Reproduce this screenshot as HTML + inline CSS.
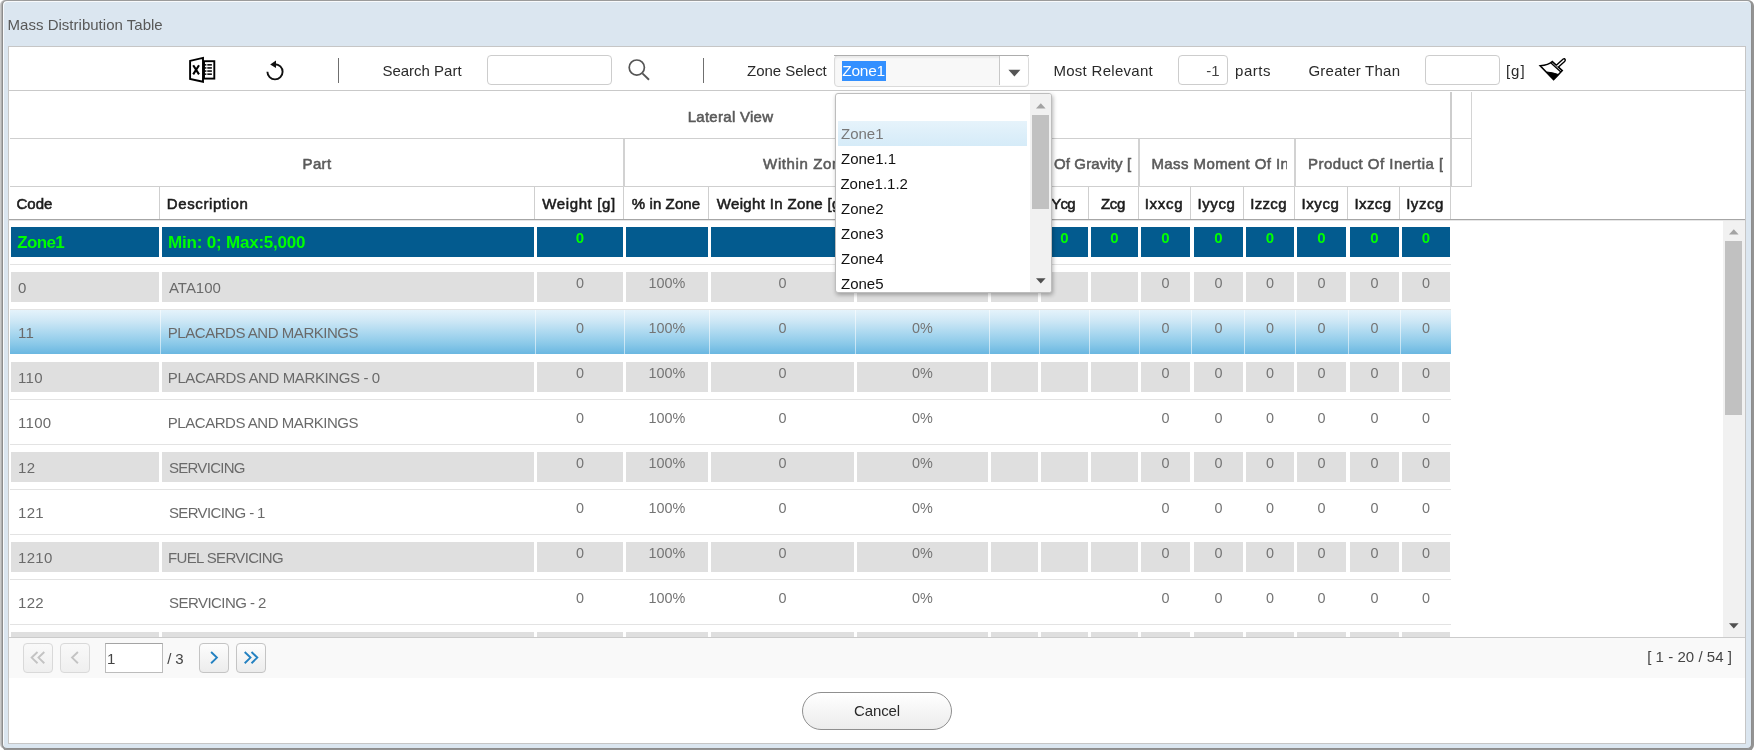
<!DOCTYPE html>
<html lang="en"><head><meta charset="utf-8"><title>Mass Distribution Table</title>
<style>
html,body{margin:0;padding:0}
body{width:1754px;height:750px;overflow:hidden;background:#fff;font-family:"Liberation Sans", sans-serif;font-size:15px;position:relative}
div{position:absolute;box-sizing:border-box}
#root{left:0;top:0;width:1754px;height:750px;will-change:transform}
.t{white-space:nowrap;overflow:visible}
.t span{display:inline-block}
#win{left:2px;top:0;width:1750px;height:749px;background:#dbe6f0;border-style:solid;border-color:#9b9b9b #8d8d8d #8d8d8d #8c8c8c;border-width:1px;border-radius:5px;box-shadow:inset 1px 1px 0 rgba(255,255,255,.8), 1px 1px 0 1px #939393, -1px 0 0 0 #b0b0b0, -2px 0 0 0 #cacaca}
.title{color:#585858;font-size:15px}
.lbl{color:#2a2a2a;font-size:15px}
.gh{color:#5a5a5a;font-size:15px;-webkit-text-stroke:0.55px #5a5a5a}
.ch{color:#1c1c1c;font-size:15px;-webkit-text-stroke:0.55px #1c1c1c}
.c{color:#6a6a6a;font-size:15px}
.n{color:#747474;font-size:14.4px}
.z{color:#00ff00;font-size:17px;font-weight:bold}
.zn{color:#00ff00;font-size:15px;font-weight:bold}
.dd{color:#111;font-size:15px}
.pg{color:#444;font-size:15px}
.inp{background:#fff;border:1px solid #cdcdcd;border-radius:4px}
.vl{background:#cfcfcf;width:1px}
.hl{background:#cfcfcf;height:1px}
.cell{background:#dfdfdf}
.zcell{background:#035b8f}
.pbtn{border:1px solid #d9d9d9;border-radius:4px;background:linear-gradient(#f9f9f9,#efefef)}
.pbtn.on{border-color:#c4c4c4;background:linear-gradient(#fdfdfd,#ececec)}
svg{position:absolute;overflow:visible}
</style></head>
<body>
<div id="root">
<div id="win"></div>
<div class="t title" style="left:7.6px;top:16px;height:18px;line-height:18px;letter-spacing:0.013px;">Mass Distribution Table</div>
<div style="left:8px;top:46px;width:1738px;height:698px;background:#fff;border:1px solid #c6c6c6"></div>
<div style="left:9px;top:90px;width:1736px;height:1px;background:#c9c9c9"></div>
<svg style="left:186px;top:54px" width="32" height="32" viewBox="186 54 32 32">
<rect x="204" y="61.2" width="10.3" height="17.4" fill="#fff" stroke="#000" stroke-width="1.9"/>
<g fill="#000"><rect x="204.2" y="64.1" width="2.2" height="1.5"/><rect x="207.3" y="64.1" width="4.6" height="1.5"/>
<rect x="204.2" y="67.2" width="2.2" height="1.5"/><rect x="207.3" y="67.2" width="4.6" height="1.5"/>
<rect x="204.2" y="70.3" width="2.2" height="1.5"/><rect x="207.3" y="70.3" width="4.6" height="1.5"/>
<rect x="204.2" y="73.4" width="2.2" height="1.5"/><rect x="207.3" y="73.4" width="4.6" height="1.5"/></g>
<path d="M190.1 60.9 L203 57.9 L203 81.8 L190.1 79 Z" fill="#fff" stroke="#000" stroke-width="1.9" stroke-linejoin="miter"/>
<path d="M193.2 65.2 L199 74.4 M199 65.2 L193.2 74.4" stroke="#000" stroke-width="2.1" fill="none"/>
</svg>
<svg style="left:262px;top:56px" width="26" height="28" viewBox="262 56 26 28">
<path d="M275 64.2 A7.6 7.6 0 1 1 267.4 71.8" fill="none" stroke="#111" stroke-width="1.9"/>
<path d="M270.2 64.4 L276 60.6 L276 68 Z" fill="#111"/>
</svg>
<div style="left:338px;top:58px;width:1px;height:25px;background:#6f6f6f"></div>
<div style="left:703px;top:58px;width:1px;height:25px;background:#6f6f6f"></div>
<div class="t lbl" style="left:382.4px;top:56px;height:30px;line-height:30px;letter-spacing:-0.004px;">Search Part</div>
<div class="inp" style="left:487px;top:55px;width:125px;height:30px;"></div>
<svg style="left:626px;top:57px" width="26" height="26" viewBox="626 57 26 26">
<circle cx="636.8" cy="67.6" r="7.6" fill="none" stroke="#555" stroke-width="1.7"/>
<path d="M642.4 73.4 L649 79.8" stroke="#555" stroke-width="1.9" fill="none"/>
</svg>
<div class="t lbl" style="left:747px;top:56px;height:30px;line-height:30px;letter-spacing:-0.028px;">Zone Select</div>
<div style="left:834px;top:55px;width:195px;height:31.5px;background:#f8f8f8;border:1px solid #dadada;border-radius:4px;box-shadow:inset 0 2px 2px rgba(0,0,0,.06)"></div>
<div style="left:834px;top:55px;width:195px;height:1px;background:#adadad"></div>
<div style="left:999px;top:56px;width:29px;height:29px;background:#fff;border-left:1px solid #c8c8c8;border-radius:0 3px 3px 0"></div>
<svg style="left:1008px;top:69px" width="13" height="8" viewBox="0 0 13 8"><path d="M0.4 0.8 L12.4 0.8 L6.4 7.6 Z" fill="#555"/></svg>
<div style="left:842px;top:61px;width:44px;height:20px;background:#3390ff"></div>
<div class="t dd" style="left:842.3px;top:61px;height:20px;line-height:20px;letter-spacing:-0.257px;color:#fff;font-size:15.5px">Zone1</div>
<div class="t lbl" style="left:1053.4px;top:56px;height:30px;line-height:30px;letter-spacing:0.291px;">Most Relevant</div>
<div class="inp" style="left:1178px;top:55px;width:50px;height:30px;"></div>
<div class="t lbl" style="left:1178px;top:56px;height:30px;line-height:30px;width:50px;text-align:right;padding-right:8.5px;color:#444">-1</div>
<div class="t lbl" style="left:1235px;top:56px;height:30px;line-height:30px;letter-spacing:0.538px;">parts</div>
<div class="t lbl" style="left:1308.4px;top:56px;height:30px;line-height:30px;letter-spacing:0.248px;">Greater Than</div>
<div class="inp" style="left:1425px;top:55px;width:75px;height:30px;"></div>
<div class="t lbl" style="left:1506px;top:56px;height:30px;line-height:30px;letter-spacing:0.945px;">[g]</div>
<svg style="left:1538px;top:56px" width="30" height="28" viewBox="1538 56 30 28">
<path d="M1540.2 65.8 Q1548.5 65.4 1552.3 61.6 L1562.3 70.6 L1553.6 79.6 Z" fill="#fff" stroke="#000" stroke-width="1.45" stroke-linejoin="miter"/>
<path d="M1546.8 72.0 Q1552.5 72.4 1558.6 74.6 L1553.6 79.6 Z" fill="#000" stroke="#000" stroke-width="1"/>
<path d="M1551.0 63.1 L1560.9 72.1" stroke="#000" stroke-width="1.3" fill="none"/>
<path d="M1556.3 65.3 L1563.2 59.0 Q1564.6 58.2 1565.2 59.6 Q1565.5 60.6 1564.6 61.4 L1558.2 67.2" fill="#fff" stroke="#000" stroke-width="1.4"/>
</svg>
<div class="hl" style="left:10px;top:138px;width:1462px;height:1px;"></div>
<div class="hl" style="left:10px;top:186px;width:1462px;height:1px;"></div>
<div style="left:9px;top:219px;width:1736px;height:1px;background:#a6a6a6"></div>
<div style="left:9px;top:220px;width:1736px;height:1px;background:#e6e6e6"></div>
<div style="left:1450px;top:92px;width:2px;height:95px;background:#cdcdcd"></div>
<div style="left:1471px;top:92px;width:1px;height:95px;background:#d4d4d4"></div>
<div style="left:623px;top:139px;width:2px;height:48px;background:#d2d2d2"></div>
<div style="left:988px;top:139px;width:2px;height:48px;background:#d2d2d2"></div>
<div style="left:1138px;top:139px;width:2px;height:48px;background:#d2d2d2"></div>
<div style="left:1294px;top:139px;width:2px;height:48px;background:#d2d2d2"></div>
<div class="vl" style="left:159px;top:187px;width:1px;height:32px;"></div>
<div class="vl" style="left:534px;top:187px;width:1px;height:32px;"></div>
<div class="vl" style="left:623px;top:187px;width:1px;height:32px;"></div>
<div class="vl" style="left:708px;top:187px;width:1px;height:32px;"></div>
<div class="vl" style="left:854px;top:187px;width:1px;height:32px;"></div>
<div class="vl" style="left:988px;top:187px;width:1px;height:32px;"></div>
<div class="vl" style="left:1038px;top:187px;width:1px;height:32px;"></div>
<div class="vl" style="left:1088px;top:187px;width:1px;height:32px;"></div>
<div class="vl" style="left:1138px;top:187px;width:1px;height:32px;"></div>
<div class="vl" style="left:1190px;top:187px;width:1px;height:32px;"></div>
<div class="vl" style="left:1243px;top:187px;width:1px;height:32px;"></div>
<div class="vl" style="left:1294px;top:187px;width:1px;height:32px;"></div>
<div class="vl" style="left:1347px;top:187px;width:1px;height:32px;"></div>
<div class="vl" style="left:1399px;top:187px;width:1px;height:32px;"></div>
<div class="vl" style="left:1450px;top:187px;width:1px;height:32px;"></div>
<div class="t gh" style="left:10px;top:94px;height:46px;line-height:46px;width:1441px;text-align:center;letter-spacing:0.287px;">Lateral View</div>
<div class="t gh" style="left:10px;top:140px;height:47px;line-height:47px;width:614px;text-align:center;letter-spacing:0.319px;">Part</div>
<div class="t gh" style="left:624px;top:140px;height:47px;line-height:47px;width:365px;text-align:center;letter-spacing:0.611px;">Within Zone</div>
<div class="t gh" style="left:1001px;top:140px;height:47px;line-height:47px;">Center</div>
<div class="t gh" style="left:1054px;top:140px;height:47px;line-height:47px;letter-spacing:0.120px;overflow:hidden;width:77.5px">Of Gravity [mm]</div>
<div class="t gh" style="left:1151.4px;top:140px;height:47px;line-height:47px;letter-spacing:0.416px;overflow:hidden;width:136px">Mass Moment Of Inertia [g mm2]</div>
<div class="t gh" style="left:1308px;top:140px;height:47px;line-height:47px;letter-spacing:0.488px;overflow:hidden;width:134.5px">Product Of Inertia [g mm2]</div>
<div class="t ch" style="left:16.5px;top:188px;height:32px;line-height:32px;letter-spacing:-0.006px;">Code</div>
<div class="t ch" style="left:166.8px;top:188px;height:32px;line-height:32px;letter-spacing:0.601px;">Description</div>
<div class="t ch" style="left:534px;top:188px;height:32px;line-height:32px;width:90px;text-align:center;letter-spacing:0.612px;">Weight [g]</div>
<div class="t ch" style="left:624px;top:188px;height:32px;line-height:32px;width:84px;text-align:center;letter-spacing:0.101px;">% in Zone</div>
<div class="t ch" style="left:708px;top:188px;height:32px;line-height:32px;width:146px;text-align:center;letter-spacing:0.346px;">Weight In Zone [g]</div>
<div class="t ch" style="left:854px;top:188px;height:32px;line-height:32px;width:134px;text-align:center;">% Of Zone [%]</div>
<div class="t ch" style="left:988px;top:188px;height:32px;line-height:32px;width:50px;text-align:center;">Xcg</div>
<div class="t ch" style="left:1038px;top:188px;height:32px;line-height:32px;width:50px;text-align:center;letter-spacing:-0.700px;">Ycg</div>
<div class="t ch" style="left:1088px;top:188px;height:32px;line-height:32px;width:50px;text-align:center;letter-spacing:-0.331px;">Zcg</div>
<div class="t ch" style="left:1138px;top:188px;height:32px;line-height:32px;width:52px;text-align:center;letter-spacing:0.733px;">Ixxcg</div>
<div class="t ch" style="left:1190px;top:188px;height:32px;line-height:32px;width:53px;text-align:center;letter-spacing:0.633px;">Iyycg</div>
<div class="t ch" style="left:1243px;top:188px;height:32px;line-height:32px;width:51px;text-align:center;letter-spacing:0.333px;">Izzcg</div>
<div class="t ch" style="left:1294px;top:188px;height:32px;line-height:32px;width:53px;text-align:center;letter-spacing:0.583px;">Ixycg</div>
<div class="t ch" style="left:1347px;top:188px;height:32px;line-height:32px;width:52px;text-align:center;letter-spacing:0.433px;">Ixzcg</div>
<div class="t ch" style="left:1399px;top:188px;height:32px;line-height:32px;width:52px;text-align:center;letter-spacing:0.533px;">Iyzcg</div>
<div class="zcell" style="left:11px;top:227px;width:148px;height:30px;"></div>
<div class="zcell" style="left:162px;top:227px;width:372px;height:30px;"></div>
<div class="zcell" style="left:537px;top:227px;width:86px;height:30px;"></div>
<div class="zcell" style="left:626px;top:227px;width:82px;height:30px;"></div>
<div class="zcell" style="left:711px;top:227px;width:143px;height:30px;"></div>
<div class="zcell" style="left:857px;top:227px;width:131px;height:30px;"></div>
<div class="zcell" style="left:991px;top:227px;width:47px;height:30px;"></div>
<div class="zcell" style="left:1041px;top:227px;width:47px;height:30px;"></div>
<div class="zcell" style="left:1091px;top:227px;width:47px;height:30px;"></div>
<div class="zcell" style="left:1141px;top:227px;width:49px;height:30px;"></div>
<div class="zcell" style="left:1194px;top:227px;width:49px;height:30px;"></div>
<div class="zcell" style="left:1246px;top:227px;width:48px;height:30px;"></div>
<div class="zcell" style="left:1297px;top:227px;width:49px;height:30px;"></div>
<div class="zcell" style="left:1350px;top:227px;width:49px;height:30px;"></div>
<div class="zcell" style="left:1402px;top:227px;width:48px;height:30px;"></div>
<div class="t z" style="left:17.3px;top:228px;height:30px;line-height:30px;letter-spacing:-0.677px;">Zone1</div>
<div class="t z" style="left:168.1px;top:228px;height:30px;line-height:30px;letter-spacing:-0.207px;">Min: 0; Max:5,000</div>
<div class="t zn" style="left:537px;top:223px;height:30px;line-height:30px;width:86px;text-align:center;">0</div>
<div class="t zn" style="left:991px;top:223px;height:30px;line-height:30px;width:47px;text-align:center;">0</div>
<div class="t zn" style="left:1041px;top:223px;height:30px;line-height:30px;width:47px;text-align:center;">0</div>
<div class="t zn" style="left:1091px;top:223px;height:30px;line-height:30px;width:47px;text-align:center;">0</div>
<div class="t zn" style="left:1141px;top:223px;height:30px;line-height:30px;width:49px;text-align:center;">0</div>
<div class="t zn" style="left:1194px;top:223px;height:30px;line-height:30px;width:49px;text-align:center;">0</div>
<div class="t zn" style="left:1246px;top:223px;height:30px;line-height:30px;width:48px;text-align:center;">0</div>
<div class="t zn" style="left:1297px;top:223px;height:30px;line-height:30px;width:49px;text-align:center;">0</div>
<div class="t zn" style="left:1350px;top:223px;height:30px;line-height:30px;width:49px;text-align:center;">0</div>
<div class="t zn" style="left:1402px;top:223px;height:30px;line-height:30px;width:48px;text-align:center;">0</div>
<div style="left:10px;top:264px;width:1441px;height:1px;background:#e3e3e3"></div>
<div class="cell" style="left:11px;top:272px;width:148px;height:30px;"></div>
<div class="cell" style="left:162px;top:272px;width:372px;height:30px;"></div>
<div class="cell" style="left:537px;top:272px;width:86px;height:30px;"></div>
<div class="cell" style="left:626px;top:272px;width:82px;height:30px;"></div>
<div class="cell" style="left:711px;top:272px;width:143px;height:30px;"></div>
<div class="cell" style="left:857px;top:272px;width:131px;height:30px;"></div>
<div class="cell" style="left:991px;top:272px;width:47px;height:30px;"></div>
<div class="cell" style="left:1041px;top:272px;width:47px;height:30px;"></div>
<div class="cell" style="left:1091px;top:272px;width:47px;height:30px;"></div>
<div class="cell" style="left:1141px;top:272px;width:49px;height:30px;"></div>
<div class="cell" style="left:1194px;top:272px;width:49px;height:30px;"></div>
<div class="cell" style="left:1246px;top:272px;width:48px;height:30px;"></div>
<div class="cell" style="left:1297px;top:272px;width:49px;height:30px;"></div>
<div class="cell" style="left:1350px;top:272px;width:49px;height:30px;"></div>
<div class="cell" style="left:1402px;top:272px;width:48px;height:30px;"></div>
<div class="t c" style="left:18px;top:273px;height:30px;line-height:30px;letter-spacing:0.300px;">0</div>
<div class="t c" style="left:169px;top:273px;height:30px;line-height:30px;letter-spacing:-0.026px;">ATA100</div>
<div class="t n" style="left:537px;top:268px;height:30px;line-height:30px;width:86px;text-align:center;">0</div>
<div class="t n" style="left:626px;top:268px;height:30px;line-height:30px;width:82px;text-align:center;">100%</div>
<div class="t n" style="left:711px;top:268px;height:30px;line-height:30px;width:143px;text-align:center;">0</div>
<div class="t n" style="left:857px;top:268px;height:30px;line-height:30px;width:131px;text-align:center;">0%</div>
<div class="t n" style="left:1141px;top:268px;height:30px;line-height:30px;width:49px;text-align:center;">0</div>
<div class="t n" style="left:1194px;top:268px;height:30px;line-height:30px;width:49px;text-align:center;">0</div>
<div class="t n" style="left:1246px;top:268px;height:30px;line-height:30px;width:48px;text-align:center;">0</div>
<div class="t n" style="left:1297px;top:268px;height:30px;line-height:30px;width:49px;text-align:center;">0</div>
<div class="t n" style="left:1350px;top:268px;height:30px;line-height:30px;width:49px;text-align:center;">0</div>
<div class="t n" style="left:1402px;top:268px;height:30px;line-height:30px;width:48px;text-align:center;">0</div>
<div style="left:10px;top:309px;width:1441px;height:1px;background:#e3e3e3"></div>
<div style="left:10px;top:310px;width:1441px;height:44px;background:linear-gradient(#e5f3fb 0%,#cde7f5 25%,#add9f0 50%,#8dcae9 75%,#6ab7e1 100%)"></div>
<div style="left:160px;top:310px;width:1px;height:44px;background:rgba(255,255,255,.55)"></div>
<div style="left:535px;top:310px;width:1px;height:44px;background:rgba(255,255,255,.55)"></div>
<div style="left:624px;top:310px;width:1px;height:44px;background:rgba(255,255,255,.55)"></div>
<div style="left:709px;top:310px;width:1px;height:44px;background:rgba(255,255,255,.55)"></div>
<div style="left:855px;top:310px;width:1px;height:44px;background:rgba(255,255,255,.55)"></div>
<div style="left:989px;top:310px;width:1px;height:44px;background:rgba(255,255,255,.55)"></div>
<div style="left:1039px;top:310px;width:1px;height:44px;background:rgba(255,255,255,.55)"></div>
<div style="left:1089px;top:310px;width:1px;height:44px;background:rgba(255,255,255,.55)"></div>
<div style="left:1139px;top:310px;width:1px;height:44px;background:rgba(255,255,255,.55)"></div>
<div style="left:1191px;top:310px;width:1px;height:44px;background:rgba(255,255,255,.55)"></div>
<div style="left:1244px;top:310px;width:1px;height:44px;background:rgba(255,255,255,.55)"></div>
<div style="left:1295px;top:310px;width:1px;height:44px;background:rgba(255,255,255,.55)"></div>
<div style="left:1348px;top:310px;width:1px;height:44px;background:rgba(255,255,255,.55)"></div>
<div style="left:1400px;top:310px;width:1px;height:44px;background:rgba(255,255,255,.55)"></div>
<div class="t c" style="left:18px;top:318px;height:30px;line-height:30px;letter-spacing:0.300px;">11</div>
<div class="t c" style="left:167.8px;top:318px;height:30px;line-height:30px;letter-spacing:-0.463px;">PLACARDS AND MARKINGS</div>
<div class="t n" style="left:537px;top:313px;height:30px;line-height:30px;width:86px;text-align:center;">0</div>
<div class="t n" style="left:626px;top:313px;height:30px;line-height:30px;width:82px;text-align:center;">100%</div>
<div class="t n" style="left:711px;top:313px;height:30px;line-height:30px;width:143px;text-align:center;">0</div>
<div class="t n" style="left:857px;top:313px;height:30px;line-height:30px;width:131px;text-align:center;">0%</div>
<div class="t n" style="left:1141px;top:313px;height:30px;line-height:30px;width:49px;text-align:center;">0</div>
<div class="t n" style="left:1194px;top:313px;height:30px;line-height:30px;width:49px;text-align:center;">0</div>
<div class="t n" style="left:1246px;top:313px;height:30px;line-height:30px;width:48px;text-align:center;">0</div>
<div class="t n" style="left:1297px;top:313px;height:30px;line-height:30px;width:49px;text-align:center;">0</div>
<div class="t n" style="left:1350px;top:313px;height:30px;line-height:30px;width:49px;text-align:center;">0</div>
<div class="t n" style="left:1402px;top:313px;height:30px;line-height:30px;width:48px;text-align:center;">0</div>
<div class="cell" style="left:11px;top:362px;width:148px;height:30px;"></div>
<div class="cell" style="left:162px;top:362px;width:372px;height:30px;"></div>
<div class="cell" style="left:537px;top:362px;width:86px;height:30px;"></div>
<div class="cell" style="left:626px;top:362px;width:82px;height:30px;"></div>
<div class="cell" style="left:711px;top:362px;width:143px;height:30px;"></div>
<div class="cell" style="left:857px;top:362px;width:131px;height:30px;"></div>
<div class="cell" style="left:991px;top:362px;width:47px;height:30px;"></div>
<div class="cell" style="left:1041px;top:362px;width:47px;height:30px;"></div>
<div class="cell" style="left:1091px;top:362px;width:47px;height:30px;"></div>
<div class="cell" style="left:1141px;top:362px;width:49px;height:30px;"></div>
<div class="cell" style="left:1194px;top:362px;width:49px;height:30px;"></div>
<div class="cell" style="left:1246px;top:362px;width:48px;height:30px;"></div>
<div class="cell" style="left:1297px;top:362px;width:49px;height:30px;"></div>
<div class="cell" style="left:1350px;top:362px;width:49px;height:30px;"></div>
<div class="cell" style="left:1402px;top:362px;width:48px;height:30px;"></div>
<div class="t c" style="left:18px;top:363px;height:30px;line-height:30px;letter-spacing:0.300px;">110</div>
<div class="t c" style="left:167.8px;top:363px;height:30px;line-height:30px;letter-spacing:-0.392px;">PLACARDS AND MARKINGS - 0</div>
<div class="t n" style="left:537px;top:358px;height:30px;line-height:30px;width:86px;text-align:center;">0</div>
<div class="t n" style="left:626px;top:358px;height:30px;line-height:30px;width:82px;text-align:center;">100%</div>
<div class="t n" style="left:711px;top:358px;height:30px;line-height:30px;width:143px;text-align:center;">0</div>
<div class="t n" style="left:857px;top:358px;height:30px;line-height:30px;width:131px;text-align:center;">0%</div>
<div class="t n" style="left:1141px;top:358px;height:30px;line-height:30px;width:49px;text-align:center;">0</div>
<div class="t n" style="left:1194px;top:358px;height:30px;line-height:30px;width:49px;text-align:center;">0</div>
<div class="t n" style="left:1246px;top:358px;height:30px;line-height:30px;width:48px;text-align:center;">0</div>
<div class="t n" style="left:1297px;top:358px;height:30px;line-height:30px;width:49px;text-align:center;">0</div>
<div class="t n" style="left:1350px;top:358px;height:30px;line-height:30px;width:49px;text-align:center;">0</div>
<div class="t n" style="left:1402px;top:358px;height:30px;line-height:30px;width:48px;text-align:center;">0</div>
<div style="left:10px;top:399px;width:1441px;height:1px;background:#e3e3e3"></div>
<div class="t c" style="left:18px;top:408px;height:30px;line-height:30px;letter-spacing:0.300px;">1100</div>
<div class="t c" style="left:167.8px;top:408px;height:30px;line-height:30px;letter-spacing:-0.463px;">PLACARDS AND MARKINGS</div>
<div class="t n" style="left:537px;top:403px;height:30px;line-height:30px;width:86px;text-align:center;">0</div>
<div class="t n" style="left:626px;top:403px;height:30px;line-height:30px;width:82px;text-align:center;">100%</div>
<div class="t n" style="left:711px;top:403px;height:30px;line-height:30px;width:143px;text-align:center;">0</div>
<div class="t n" style="left:857px;top:403px;height:30px;line-height:30px;width:131px;text-align:center;">0%</div>
<div class="t n" style="left:1141px;top:403px;height:30px;line-height:30px;width:49px;text-align:center;">0</div>
<div class="t n" style="left:1194px;top:403px;height:30px;line-height:30px;width:49px;text-align:center;">0</div>
<div class="t n" style="left:1246px;top:403px;height:30px;line-height:30px;width:48px;text-align:center;">0</div>
<div class="t n" style="left:1297px;top:403px;height:30px;line-height:30px;width:49px;text-align:center;">0</div>
<div class="t n" style="left:1350px;top:403px;height:30px;line-height:30px;width:49px;text-align:center;">0</div>
<div class="t n" style="left:1402px;top:403px;height:30px;line-height:30px;width:48px;text-align:center;">0</div>
<div style="left:10px;top:444px;width:1441px;height:1px;background:#e3e3e3"></div>
<div class="cell" style="left:11px;top:452px;width:148px;height:30px;"></div>
<div class="cell" style="left:162px;top:452px;width:372px;height:30px;"></div>
<div class="cell" style="left:537px;top:452px;width:86px;height:30px;"></div>
<div class="cell" style="left:626px;top:452px;width:82px;height:30px;"></div>
<div class="cell" style="left:711px;top:452px;width:143px;height:30px;"></div>
<div class="cell" style="left:857px;top:452px;width:131px;height:30px;"></div>
<div class="cell" style="left:991px;top:452px;width:47px;height:30px;"></div>
<div class="cell" style="left:1041px;top:452px;width:47px;height:30px;"></div>
<div class="cell" style="left:1091px;top:452px;width:47px;height:30px;"></div>
<div class="cell" style="left:1141px;top:452px;width:49px;height:30px;"></div>
<div class="cell" style="left:1194px;top:452px;width:49px;height:30px;"></div>
<div class="cell" style="left:1246px;top:452px;width:48px;height:30px;"></div>
<div class="cell" style="left:1297px;top:452px;width:49px;height:30px;"></div>
<div class="cell" style="left:1350px;top:452px;width:49px;height:30px;"></div>
<div class="cell" style="left:1402px;top:452px;width:48px;height:30px;"></div>
<div class="t c" style="left:18px;top:453px;height:30px;line-height:30px;letter-spacing:0.300px;">12</div>
<div class="t c" style="left:168.9px;top:453px;height:30px;line-height:30px;letter-spacing:-0.700px;">SERVICING</div>
<div class="t n" style="left:537px;top:448px;height:30px;line-height:30px;width:86px;text-align:center;">0</div>
<div class="t n" style="left:626px;top:448px;height:30px;line-height:30px;width:82px;text-align:center;">100%</div>
<div class="t n" style="left:711px;top:448px;height:30px;line-height:30px;width:143px;text-align:center;">0</div>
<div class="t n" style="left:857px;top:448px;height:30px;line-height:30px;width:131px;text-align:center;">0%</div>
<div class="t n" style="left:1141px;top:448px;height:30px;line-height:30px;width:49px;text-align:center;">0</div>
<div class="t n" style="left:1194px;top:448px;height:30px;line-height:30px;width:49px;text-align:center;">0</div>
<div class="t n" style="left:1246px;top:448px;height:30px;line-height:30px;width:48px;text-align:center;">0</div>
<div class="t n" style="left:1297px;top:448px;height:30px;line-height:30px;width:49px;text-align:center;">0</div>
<div class="t n" style="left:1350px;top:448px;height:30px;line-height:30px;width:49px;text-align:center;">0</div>
<div class="t n" style="left:1402px;top:448px;height:30px;line-height:30px;width:48px;text-align:center;">0</div>
<div style="left:10px;top:489px;width:1441px;height:1px;background:#e3e3e3"></div>
<div class="t c" style="left:18px;top:498px;height:30px;line-height:30px;letter-spacing:0.300px;">121</div>
<div class="t c" style="left:168.9px;top:498px;height:30px;line-height:30px;letter-spacing:-0.614px;">SERVICING - 1</div>
<div class="t n" style="left:537px;top:493px;height:30px;line-height:30px;width:86px;text-align:center;">0</div>
<div class="t n" style="left:626px;top:493px;height:30px;line-height:30px;width:82px;text-align:center;">100%</div>
<div class="t n" style="left:711px;top:493px;height:30px;line-height:30px;width:143px;text-align:center;">0</div>
<div class="t n" style="left:857px;top:493px;height:30px;line-height:30px;width:131px;text-align:center;">0%</div>
<div class="t n" style="left:1141px;top:493px;height:30px;line-height:30px;width:49px;text-align:center;">0</div>
<div class="t n" style="left:1194px;top:493px;height:30px;line-height:30px;width:49px;text-align:center;">0</div>
<div class="t n" style="left:1246px;top:493px;height:30px;line-height:30px;width:48px;text-align:center;">0</div>
<div class="t n" style="left:1297px;top:493px;height:30px;line-height:30px;width:49px;text-align:center;">0</div>
<div class="t n" style="left:1350px;top:493px;height:30px;line-height:30px;width:49px;text-align:center;">0</div>
<div class="t n" style="left:1402px;top:493px;height:30px;line-height:30px;width:48px;text-align:center;">0</div>
<div style="left:10px;top:534px;width:1441px;height:1px;background:#e3e3e3"></div>
<div class="cell" style="left:11px;top:542px;width:148px;height:30px;"></div>
<div class="cell" style="left:162px;top:542px;width:372px;height:30px;"></div>
<div class="cell" style="left:537px;top:542px;width:86px;height:30px;"></div>
<div class="cell" style="left:626px;top:542px;width:82px;height:30px;"></div>
<div class="cell" style="left:711px;top:542px;width:143px;height:30px;"></div>
<div class="cell" style="left:857px;top:542px;width:131px;height:30px;"></div>
<div class="cell" style="left:991px;top:542px;width:47px;height:30px;"></div>
<div class="cell" style="left:1041px;top:542px;width:47px;height:30px;"></div>
<div class="cell" style="left:1091px;top:542px;width:47px;height:30px;"></div>
<div class="cell" style="left:1141px;top:542px;width:49px;height:30px;"></div>
<div class="cell" style="left:1194px;top:542px;width:49px;height:30px;"></div>
<div class="cell" style="left:1246px;top:542px;width:48px;height:30px;"></div>
<div class="cell" style="left:1297px;top:542px;width:49px;height:30px;"></div>
<div class="cell" style="left:1350px;top:542px;width:49px;height:30px;"></div>
<div class="cell" style="left:1402px;top:542px;width:48px;height:30px;"></div>
<div class="t c" style="left:18px;top:543px;height:30px;line-height:30px;letter-spacing:0.300px;">1210</div>
<div class="t c" style="left:168px;top:543px;height:30px;line-height:30px;letter-spacing:-0.653px;">FUEL SERVICING</div>
<div class="t n" style="left:537px;top:538px;height:30px;line-height:30px;width:86px;text-align:center;">0</div>
<div class="t n" style="left:626px;top:538px;height:30px;line-height:30px;width:82px;text-align:center;">100%</div>
<div class="t n" style="left:711px;top:538px;height:30px;line-height:30px;width:143px;text-align:center;">0</div>
<div class="t n" style="left:857px;top:538px;height:30px;line-height:30px;width:131px;text-align:center;">0%</div>
<div class="t n" style="left:1141px;top:538px;height:30px;line-height:30px;width:49px;text-align:center;">0</div>
<div class="t n" style="left:1194px;top:538px;height:30px;line-height:30px;width:49px;text-align:center;">0</div>
<div class="t n" style="left:1246px;top:538px;height:30px;line-height:30px;width:48px;text-align:center;">0</div>
<div class="t n" style="left:1297px;top:538px;height:30px;line-height:30px;width:49px;text-align:center;">0</div>
<div class="t n" style="left:1350px;top:538px;height:30px;line-height:30px;width:49px;text-align:center;">0</div>
<div class="t n" style="left:1402px;top:538px;height:30px;line-height:30px;width:48px;text-align:center;">0</div>
<div style="left:10px;top:579px;width:1441px;height:1px;background:#e3e3e3"></div>
<div class="t c" style="left:18px;top:588px;height:30px;line-height:30px;letter-spacing:0.300px;">122</div>
<div class="t c" style="left:169px;top:588px;height:30px;line-height:30px;letter-spacing:-0.548px;">SERVICING - 2</div>
<div class="t n" style="left:537px;top:583px;height:30px;line-height:30px;width:86px;text-align:center;">0</div>
<div class="t n" style="left:626px;top:583px;height:30px;line-height:30px;width:82px;text-align:center;">100%</div>
<div class="t n" style="left:711px;top:583px;height:30px;line-height:30px;width:143px;text-align:center;">0</div>
<div class="t n" style="left:857px;top:583px;height:30px;line-height:30px;width:131px;text-align:center;">0%</div>
<div class="t n" style="left:1141px;top:583px;height:30px;line-height:30px;width:49px;text-align:center;">0</div>
<div class="t n" style="left:1194px;top:583px;height:30px;line-height:30px;width:49px;text-align:center;">0</div>
<div class="t n" style="left:1246px;top:583px;height:30px;line-height:30px;width:48px;text-align:center;">0</div>
<div class="t n" style="left:1297px;top:583px;height:30px;line-height:30px;width:49px;text-align:center;">0</div>
<div class="t n" style="left:1350px;top:583px;height:30px;line-height:30px;width:49px;text-align:center;">0</div>
<div class="t n" style="left:1402px;top:583px;height:30px;line-height:30px;width:48px;text-align:center;">0</div>
<div style="left:10px;top:624px;width:1441px;height:1px;background:#e3e3e3"></div>
<div class="cell" style="left:11px;top:632px;width:148px;height:6px;"></div>
<div class="cell" style="left:162px;top:632px;width:372px;height:6px;"></div>
<div class="cell" style="left:537px;top:632px;width:86px;height:6px;"></div>
<div class="cell" style="left:626px;top:632px;width:82px;height:6px;"></div>
<div class="cell" style="left:711px;top:632px;width:143px;height:6px;"></div>
<div class="cell" style="left:857px;top:632px;width:131px;height:6px;"></div>
<div class="cell" style="left:991px;top:632px;width:47px;height:6px;"></div>
<div class="cell" style="left:1041px;top:632px;width:47px;height:6px;"></div>
<div class="cell" style="left:1091px;top:632px;width:47px;height:6px;"></div>
<div class="cell" style="left:1141px;top:632px;width:49px;height:6px;"></div>
<div class="cell" style="left:1194px;top:632px;width:49px;height:6px;"></div>
<div class="cell" style="left:1246px;top:632px;width:48px;height:6px;"></div>
<div class="cell" style="left:1297px;top:632px;width:49px;height:6px;"></div>
<div class="cell" style="left:1350px;top:632px;width:49px;height:6px;"></div>
<div class="cell" style="left:1402px;top:632px;width:48px;height:6px;"></div>
<div style="left:1723px;top:221px;width:22px;height:417px;background:#f1f1f1"></div>
<div style="left:1725px;top:241px;width:17px;height:174px;background:#c1c1c1"></div>
<svg style="left:1729px;top:229px" width="10" height="6" viewBox="0 0 10 6"><path d="M0 5.4 L4.8 0.2 L9.6 5.4 Z" fill="#a3a3a3"/></svg>
<svg style="left:1729px;top:623px" width="10" height="6" viewBox="0 0 10 6"><path d="M0 0.2 L9.6 0.2 L4.8 5.4 Z" fill="#505050"/></svg>
<div style="left:9px;top:637px;width:1736px;height:41px;background:#f9f9f9;border-top:1px solid #cbcbcb"></div>
<div class="pbtn" style="left:23px;top:643px;width:30px;height:30px;"></div>
<svg style="left:0;top:0" width="1" height="1"><path d="M37.5 652.0 L31.7 657.6 L37.5 663.2 M44.3 652.0 L38.5 657.6 L44.3 663.2" fill="none" stroke="#c3c3c3" stroke-width="1.9"/></svg>
<div class="pbtn" style="left:60px;top:643px;width:30px;height:30px;"></div>
<svg style="left:0;top:0" width="1" height="1"><path d="M77.9 652.0 L72.1 657.6 L77.9 663.2" fill="none" stroke="#c3c3c3" stroke-width="1.9"/></svg>
<div style="left:105px;top:643px;width:58px;height:30px;background:#fff;border:1px solid #bcbcbc;border-top-color:#a4a4a4"></div>
<div class="t pg" style="left:107px;top:644px;height:30px;line-height:30px;">1</div>
<div class="t pg" style="left:167.3px;top:644px;height:30px;line-height:30px;letter-spacing:-0.167px;">/ 3</div>
<div class="pbtn on" style="left:199px;top:643px;width:30px;height:30px;"></div>
<svg style="left:0;top:0" width="1" height="1"><path d="M211.1 652.0 L216.9 657.6 L211.1 663.2" fill="none" stroke="#2381c1" stroke-width="1.9"/></svg>
<div class="pbtn on" style="left:236px;top:643px;width:30px;height:30px;"></div>
<svg style="left:0;top:0" width="1" height="1"><path d="M244.7 652.0 L250.5 657.6 L244.7 663.2 M251.5 652.0 L257.3 657.6 L251.5 663.2" fill="none" stroke="#2381c1" stroke-width="1.9"/></svg>
<div class="t pg" style="left:1600px;top:642px;height:30px;line-height:30px;width:132px;text-align:right;letter-spacing:0.040px;">[ 1 - 20 / 54 ]</div>
<div style="left:802px;top:692px;width:150px;height:38px;border:1px solid #8f8f8f;border-radius:19px;background:linear-gradient(#ffffff,#ececec)"></div>
<div class="t lbl" style="left:802px;top:692px;height:38px;line-height:38px;width:150px;text-align:center;letter-spacing:-0.152px;">Cancel</div>
<div style="left:835px;top:93px;width:217px;height:200px;background:#fff;border:1px solid #bdbdbd;border-radius:3px;box-shadow:1px 2px 4px rgba(0,0,0,.3);overflow:hidden"></div>
<div style="left:838px;top:121px;width:189px;height:25px;background:linear-gradient(#e6f3fb,#d5ebf8)"></div>
<div class="t dd" style="left:841px;top:121px;height:25px;line-height:25px;color:#787878;">Zone1</div>
<div class="t dd" style="left:841px;top:146px;height:25px;line-height:25px;">Zone1.1</div>
<div class="t dd" style="left:840.4px;top:171px;height:25px;line-height:25px;letter-spacing:-0.001px;">Zone1.1.2</div>
<div class="t dd" style="left:841px;top:196px;height:25px;line-height:25px;">Zone2</div>
<div class="t dd" style="left:841px;top:221px;height:25px;line-height:25px;">Zone3</div>
<div class="t dd" style="left:841px;top:246px;height:25px;line-height:25px;">Zone4</div>
<div class="t dd" style="left:841px;top:271px;height:25px;line-height:25px;height:21px;overflow:hidden;">Zone5</div>
<div style="left:1030px;top:94px;width:21px;height:198px;background:#f1f1f1;border-radius:0 2px 2px 0"></div>
<div style="left:1032px;top:115px;width:17px;height:94px;background:#c1c1c1"></div>
<svg style="left:1036px;top:103px" width="10" height="6" viewBox="0 0 10 6"><path d="M0 5.4 L4.8 0.2 L9.6 5.4 Z" fill="#a3a3a3"/></svg>
<svg style="left:1036px;top:278px" width="10" height="6" viewBox="0 0 10 6"><path d="M0 0.2 L9.6 0.2 L4.8 5.4 Z" fill="#505050"/></svg>
</div>
</body></html>
